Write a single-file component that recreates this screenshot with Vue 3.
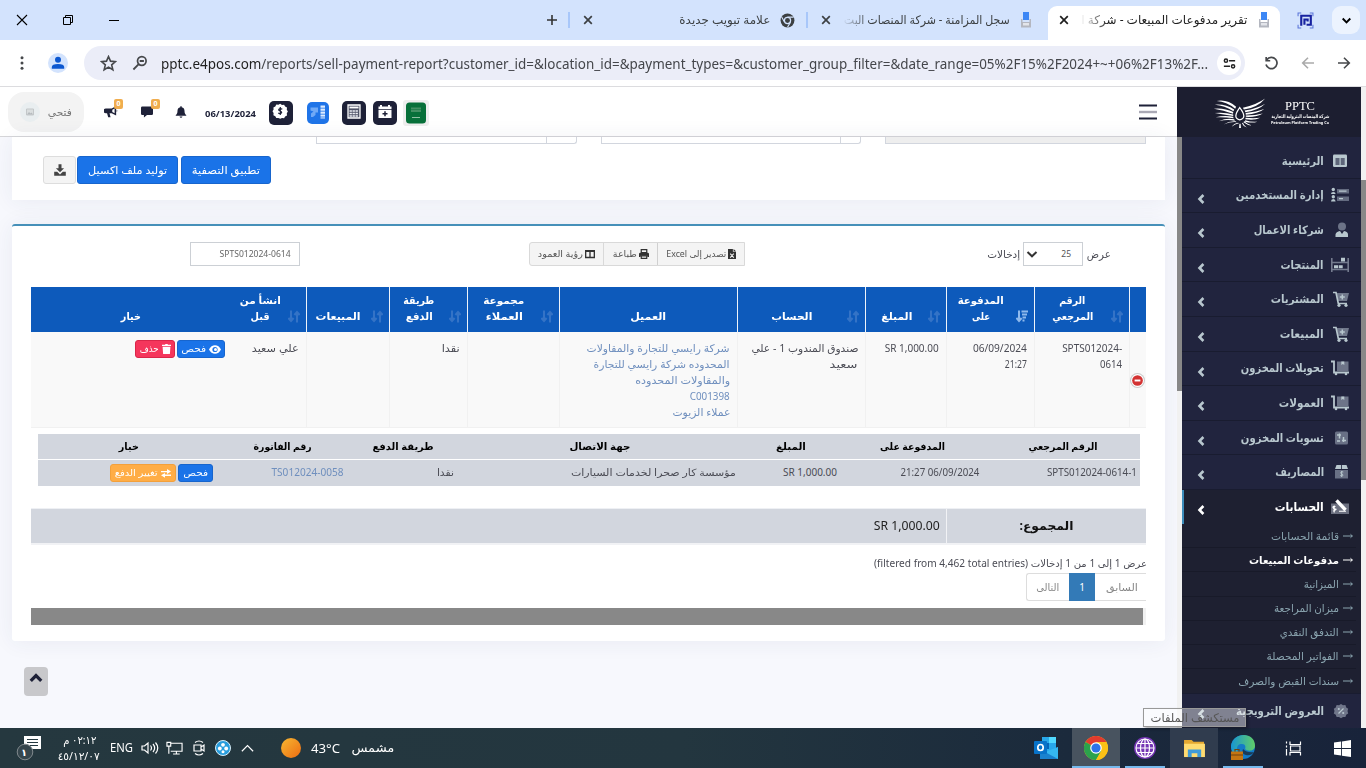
<script setup>
import { h } from 'vue'

const vFit = {
  mounted(el, { value }) {
    if (!value) return
    const natural = el.getBoundingClientRect().width
    const rtl = getComputedStyle(el.parentElement).direction === 'rtl'
    el.style.transform = `scaleX(${value / natural})`
    el.style.transformOrigin = rtl ? 'right center' : 'left center'
    el.style[rtl ? 'marginLeft' : 'marginRight'] = `${value - natural}px`
  },
}

const glyphs = {
  close: ['0 0 12 12', '<path d="M1 1l10 10M11 1L1 11" fill="none" stroke="currentColor" stroke-width="1.1"/>'],
  closeBold: ['0 0 12 12', '<path d="M2.2 2.2l7.6 7.6M9.8 2.2L2.2 9.8" fill="none" stroke="currentColor" stroke-width="1.7"/>'],
  restore: ['0 0 12 12', '<path d="M1.5 3.5h7v7h-7zM3.5 3.5v-2h7v7h-2" fill="none" stroke="currentColor"/>'],
  minus: ['0 0 12 12', '<path d="M1 6.5h10" stroke="currentColor"/>'],
  plus: ['0 0 12 12', '<path d="M6 1v10M1 6h10" stroke="currentColor" stroke-width="1.6"/>'],
  chevronDown: ['0 0 12 12', '<path d="M2.5 4.2L6 7.7l3.5-3.5" fill="none" stroke="currentColor" stroke-width="1.8"/>'],
  selectDown: ['0 0 12 12', '<path d="M1.5 4L6 8.300 10.500 4" fill="none" stroke="currentColor" stroke-width="2"/>'],
  chevronUp: ['0 0 12 12', '<path d="M1.5 8.5L6 4l4.5 4.5" fill="none" stroke="currentColor" stroke-width="2.8"/>'],
  chevronThin: ['0 0 12 12', '<path d="M.8 8.5L6 3.3l5.2 5.2" fill="none" stroke="currentColor" stroke-width="1.1"/>'],
  angle: ['0 0 8 10', '<path d="M6.400 1L2.500 5l3.900 4" fill="none" stroke="currentColor" stroke-width="2.600"/>'],
  chromeMono: ['0 0 16 16', '<circle cx="8" cy="8" r="7.4" fill="#3c4043"/><circle cx="8" cy="8" r="3.3" fill="#3c4043" stroke="#d3e3fd" stroke-width="1.3"/><path d="M8 4.4h6.5M4.9 9.8L1.8 4.3M11.1 9.8L8 15.3" stroke="#d3e3fd" stroke-width="1.2"/>'],
  device: ['0 0 12 16', '<path d="M3 0h6v8H3z" fill="#3d87f5"/><path d="M1 7h1.500v3h7V7H11v8.500H1z" fill="#b4b7c0"/><path d="M3 11h6v2.500H3z" fill="#e3e5ea"/>'],
  maze: ['0 0 16 16', '<path d="M1 4V1h3M12 1h3v3M15 12v3h-3M4 15H1v-3" fill="none" stroke="#5c76d9"/><path d="M3 3.500h10v8.500H9M4 3v10M7 12V7h3v2" fill="none" stroke="#1722a0" stroke-width="2"/>'],
  dots: ['0 0 16 16', '<circle cx="8" cy="2.7" r="1.5"/><circle cx="8" cy="8" r="1.5"/><circle cx="8" cy="13.3" r="1.5"/>'],
  person: ['0 0 20 20', '<circle cx="10" cy="10" r="10" fill="#d3e3fd"/><circle cx="10" cy="6.8" r="3" fill="#0b57d0"/><path d="M3.8 15.8V14q0-3 6.2-3t6.2 3v1.8z" fill="#0b57d0"/>'],
  star: ['0 0 16 16', '<path d="M8 1.5l1.9 4.3 4.7.4L11 9.3l1.1 4.6L8 11.4l-4.1 2.5L5 9.3 1.4 6.2l4.7-.4z" fill="none" stroke="currentColor" stroke-width="1.5"/>'],
  zoomOut: ['0 0 16 16', '<circle cx="9.8" cy="6" r="4.3" fill="none" stroke="currentColor" stroke-width="1.7"/><path d="M6.7 9.2L1.4 14.5M7.7 6h4.2" stroke="currentColor" stroke-width="1.8"/>'],
  tune: ['0 0 16 16', '<path d="M7.5 5H14M2 11h6.5" stroke="currentColor" stroke-width="1.7"/><circle cx="4.2" cy="5" r="1.7" fill="none" stroke="currentColor" stroke-width="1.6"/><circle cx="11.8" cy="11" r="1.7" fill="none" stroke="currentColor" stroke-width="1.6"/>'],
  reload: ['0 0 16 16', '<path d="M3.6 4.4A5.3 5.3 0 1 1 2.8 9M3 1.8v3.6h3.8" fill="none" stroke="currentColor" stroke-width="1.6"/>'],
  left: ['0 0 16 16', '<path d="M14 8H3M8 2.7L2.7 8 8 13.3" fill="none" stroke="currentColor" stroke-width="1.6"/>'],
  right: ['0 0 16 16', '<path d="M2 8h11M8 2.7L13.3 8 8 13.3" fill="none" stroke="currentColor" stroke-width="1.6"/>'],
  image: ['0 0 20 20', '<circle cx="10" cy="10" r="10" fill="#e9eef0"/><path d="M6.5 7h7v6h-7z" fill="#dadedf" stroke="#c3c7c9"/><path d="M7 12.5l2-2.5 1.5 1.5 1-1 1.5 2z" fill="#b5babd"/>'],
  megaphone: ['0 0 16 14', '<path d="M14 0v11L8.8 8.4H6.3L7.5 13H4.7L3.4 8.4H2A1.7 1.7 0 0 1 2 3h6.8zM12.2 3L9.5 4.5v2.4l2.7 1.5z" fill-rule="evenodd"/><path d="M14.6 4.3a1.5 1.5 0 0 1 0 2.6z"/>'],
  chat: ['0 0 14 13', '<path d="M1.5 0h11Q14 0 14 1.5v7Q14 10 12.500 10H7l-3.600 3V10H1.500Q0 10 0 8.500v-7Q0 0 1.500 0z"/>'],
  bell: ['0 0 14 14', '<path d="M6.2.3h1.600v1.100c2.400.5 3.300 2.300 3.300 4.300 0 2.700.8 3.800 2 4.900v.8H.9v-.8c1.200-1.100 2-2.200 2-4.900 0-2 .9-3.800 3.300-4.300zM5.300 12.200h3.400q-.3 1.600-1.700 1.600t-1.700-1.600z"/>'],
  money: ['0 0 24 24', '<path d="M12 5l1.800 1.100 2.100-.2 1 1.900 1.900 1-.2 2.100L19.700 12.700 18.600 14.500l.2 2.100-1.900 1-1 1.900-2.100-.2L12 20l-1.800-.9-2.100.2-1-1.900-1.900-1 .2-2.100L4.300 12.500l1.100-1.800-.2-2.100 1.900-1 1-1.900 2.100.2z" fill="#fff" transform="translate(-.8 -2.200)"/><path d="M13.300 8.300q-2.300-1.300-3.500.1c-.8 1.700 3.200 1.400 2.900 3.200-.7 1.500-2.200 1.300-3.500.5M11.300 6v8" fill="none" stroke="#1e2138" stroke-width="1.200"/>'],
  flow: ['0 0 22 22', '<path d="M13.500 3.500h4.500v13h-4.500z" fill="#dcebff"/><path d="M13 6.200h5.500M13 9.200h5.500M13 12.200h5.500M13 15h5.500" stroke="#1f74e8" stroke-width=".8"/><path d="M3.500 5.500h7.500v5H8.500v2.500L6 15H4v-3.500l2.500-2-3-1z" fill="#70a9f6"/>'],
  calculator: ['0 0 24 24', '<path d="M6 4h12v13H6z" fill="#505468" stroke="#fff" stroke-width="1.300"/><path d="M7.500 6.500h9" stroke="#fff" stroke-width="1.800"/><path d="M7.500 10h9M7.500 12.500h9M7.500 15h9" stroke="#eceef3" stroke-width="1.600" stroke-dasharray="2.400 .6"/>'],
  calendar: ['0 0 24 24', '<path d="M8 4v3M16 4v3" stroke="#fff" stroke-width="2"/><path d="M5.500 5.500h13v2.700h-13zM5.500 9h13v8h-13z" fill="#fff"/><path d="M12 10.300v5M9.500 12.800h5" stroke="#1e2138" stroke-width="1.500"/>'],
  flag: ['0 0 26 26', '<rect width="26" height="26" rx="3" fill="#eee"/><rect x="3" y="2.500" width="20" height="21" rx="3.500" fill="#07703a"/><path d="M8 8.500h10M8 11h10" stroke="#428f63" stroke-width="1.800"/><path d="M9 17.500h8" stroke="#8fc0a4"/>'],
  burger: ['0 0 18 16', '<path d="M0 1.500h18M0 14.500h18" stroke="#1e2138" stroke-width="2.200"/><path d="M0 8h18" stroke="#aaa9b5" stroke-width="2.400"/>'],
  download: ['0 0 12 12', '<path d="M4.500.3h3v3.900h2.600L6 8.300 1.900 4.200h2.600zM.2 7.800h3L6 10.500l2.800-2.700h3v3.900H.2z"/>'],
  excel: ['0 0 9 11', '<path d="M0 0h5.500v3H9v8H0zM6.300 0L9 2.400H6.300z"/><path d="M2.500 5l4 4.500M6.500 5l-4 4.500" stroke="#f4f4f4" stroke-width="1.200"/>'],
  print: ['0 0 12 12', '<path d="M2.700.8h6.600v3.500H2.700z" fill="none" stroke="currentColor" stroke-width="1.500"/><path d="M1.500 4.500h9Q12 4.500 12 6v3.500h-2V8H2v1.500H0V6q0-1.500 1.500-1.500z"/><path d="M2.700 8.300h6.600v2.900H2.700z" fill="none" stroke="currentColor" stroke-width="1.400"/>'],
  columns: ['0 0 12 10', '<path d="M.8 1h10.400v8.200H.8zM6 1v8M.5 1.700h11" fill="none" stroke="currentColor" stroke-width="1.600"/>'],
  sort: ['0 0 12 12', '<path d="M3 0v10M.4 7.500L3 10.500l2.600-3M9 12V2M6.400 4.500L9 1.500l2.600 3" fill="none" stroke="currentColor" stroke-width="2.100"/>'],
  sortDown: ['0 0 12 12', '<path d="M3 0v10M.4 7.500L3 10.500l2.600-3" fill="none" stroke="currentColor" stroke-width="2"/><path d="M5.500 1h6.500M6 4h5M6.500 7h3.500M6.500 10h2" stroke="currentColor" stroke-width="2.100"/>'],
  eye: ['0 0 12 9', '<path d="M0 4.500C2.500-1.200 9.500-1.200 12 4.500 9.500 10.200 2.500 10.200 0 4.500z"/><circle cx="6" cy="4.500" r="2.600" fill="#1a73e8"/><circle cx="6.500" cy="4.500" r="1.500"/>'],
  trash: ['0 0 9 10', '<path d="M0 .8h3L3.500 0h2L6 .8h3V2H0zM.6 2.800h7.800L7.900 10H1.100z"/>'],
  exchange: ['0 0 10 9', '<path d="M0 2h6V0l4 2.600-4 2.300V3.300H0zM10 6.900H4v1.900L0 6.300 4 4v1.500h6z"/>'],
  remove: ['0 0 14 14', '<circle cx="7" cy="7" r="7" fill="#ccc"/><circle cx="7" cy="7" r="6" fill="#fff"/><circle cx="7" cy="7" r="5" fill="#d33333"/><path d="M4.300 7h5.400" stroke="#fff" stroke-width="1.800"/>'],
  arrow: ['0 0 10 8', '<path d="M0 4h9.500M7.500 2.300L9.300 4 7.500 5.700" fill="none" stroke="currentColor"/>'],
  home: ['0 0 18 16', '<rect x="2" y="1.500" width="14" height="12.500" rx="1.200" fill="#b8c7ce"/><path d="M4.500 5h4v7h-4zM9.700 5h4v7h-4z" fill="#5d6579"/>'],
  users: ['0 0 18 16', '<circle cx="2.300" cy="2.500" r="1.700"/><circle cx="2.300" cy="9.700" r="1.700"/><path d="M0 7q0-2 2.300-2t2.300 2zM0 14.500q0-2.500 2.300-2.500t2.300 2.500z"/><path d="M6 2h12v4.500H6zM6 9.500h12V14H6z" fill="#646b80"/><path d="M8 4.200h7.500M8 11.700h4" stroke="currentColor" stroke-width="1.200"/>'],
  partner: ['0 0 18 16', '<circle cx="11" cy="4.500" r="4" fill="#6c7387"/><path d="M4.500 15v-2.500q.5-3 4.500-3.500l2 3 2-3q4 .5 4 3.500V15z"/>'],
  shelves: ['0 0 18 16', '<path d="M.8 1v14M17.200 1v14M1 5.500h16M1 12.500h16" stroke="#747b8e" stroke-width="1.600"/><path d="M10 .8h4v3.800h-4zM3 8.200h4v3H3zM7.700 8.200h4v3h-4z"/>'],
  cart: ['0 0 18 16', '<path d="M5.500 2H18l-2 8H7z" fill="#70788b"/><path d="M2 1.500h3l2.300 11H16" fill="none" stroke="currentColor" stroke-width="1.700"/><path d="M11.300 3.500v5M8.800 6h5" stroke="currentColor" stroke-width="1.500"/><circle cx="8" cy="14.300" r="1.600"/><circle cx="15" cy="14.300" r="1.600"/>'],
  dolly: ['0 0 18 16', '<path d="M6 1.500h11.500v9.500H6z" fill="#6d7488"/><path d="M0 1.500h3v11H18" fill="none" stroke="currentColor" stroke-width="1.800"/><path d="M10.300 1.500h3v3.500l-1.500-1-1.500 1z"/><circle cx="5" cy="14" r="1.300"/><circle cx="15" cy="14" r="1.300"/>'],
  sliders: ['0 0 18 16', '<rect x="4" y="1.500" width="13" height="13" rx="1.500" fill="#697085"/><path d="M6 5h4M8.500 3.500v5M11 10.500h4M12.500 7v5M6 11h3" stroke="currentColor" stroke-width="1.500"/>'],
  expense: ['0 0 18 16', '<path d="M4 6h13v8.500H4z" fill="#697085"/><path d="M5.500 1h4.700v4H4zM11 1h4.500L17 5h-6z"/><path d="M12.300 8c-3-1-3.200 1.600-1.500 2s1.700 2.700-1.500 1.600M10.700 7v6" fill="none" stroke="currentColor"/>'],
  accounts: ['0 0 20 16', '<path d="M1 4.500h18v10.500H1z" fill="#6c7080"/><path d="M6.500 1.300L15.500 11" stroke="#fff" stroke-width="3.400"/><path d="M5.500 7.500q-3-.5-2.500 1t2.500 1.500-2.500 2M4.200 6.500v7M9 12.300h7" fill="none" stroke="#fff" stroke-width="1.100"/>'],
  promo: ['0 0 18 16', '<path d="M10 1l2 1.300 2.400-.2.800 2.300 2 1.400-.7 2.300.7 2.300-2 1.400-.8 2.300-2.400-.1-2 1.300-2-1.300-2.400.1-.8-2.300-2-1.400.7-2.300L2.800 5.800l2-1.400.8-2.300 2.400.2z" fill="#70768a"/><path d="M7.500 10.500l5-5" stroke="currentColor" stroke-width="1.200"/><circle cx="7.800" cy="6" r="1.100"/><circle cx="12.200" cy="10" r="1.100"/>'],
  windows: ['0 0 16 16', '<path d="M0 2.300l6.700-.9v6.200H0zM7.500 1.300L16 0v7.600H7.500zM0 8.400h6.700v6.200L0 13.700zM7.500 8.400H16V16l-8.500-1.200z"/>'],
  taskview: ['0 0 18 16', '<path d="M1.500 1v2M1.500 5v2M1.500 8.500V15M5 1v3h10.500V1M5 15v-3h10.500v3M5.500 5.500h9.500v5H5.500z" fill="none" stroke="currentColor" stroke-width="1.200"/>'],
  edge: ['0 0 26 26', '<defs><linearGradient id="eg" x2="1"><stop stop-color="#1795d4"/><stop offset="1" stop-color="#61ce67"/></linearGradient></defs><circle cx="13" cy="12" r="12" fill="#137bc7"/><path d="M1 11C3-3 25-4 25 11c0 5-7 6-10 3 1-3 0-5-3-5C6 9 6 15 9 20 3 20 1 15 1 11z" fill="url(#eg)"/><path d="M13 14q4 4 11 3-3 4-8 3-5-1-3-6z" fill="#1a3b58"/><path d="M1 16.500h12V25H1z" fill="#c47512"/><path d="M5 16.500v-2h4v2M1 20h12" fill="none" stroke="#70430e" stroke-width="1.200"/>'],
  folder: ['0 0 24 20', '<path d="M1 1h8l2 2h11v15H1z" fill="#e5a932"/><path d="M1 5h22v14H1z" fill="#ffdc71"/><path d="M5 19v-8h14v8h-4v-4H9v4z" fill="#409bd7"/>'],
  globe: ['0 0 22 22', '<circle cx="11" cy="11" r="11" fill="#7536b5"/><g fill="none" stroke="#fff" stroke-width="1.200"><circle cx="11" cy="11" r="9"/><ellipse cx="11" cy="11" rx="4.500" ry="9"/><path d="M11 2v18M2 11h18M3.500 6.500h15M3.500 15.500h15"/></g>'],
  chrome: ['0 0 24 24', '<circle cx="12" cy="12" r="12" fill="#fbc116"/><path d="M12 12L1.600 6A12 12 0 0 1 22.400 6z" fill="#e33b2e"/><path d="M1.600 6A12 12 0 0 0 12 24l5.200-9L12 12z" fill="#2ba24c"/><path d="M12 6h10.400A12 12 0 0 1 12 24l5.200-9z" fill="#fbc116"/><circle cx="12" cy="12" r="5.800" fill="#fff"/><circle cx="12" cy="12" r="4.600" fill="#2d73e8"/>'],
  outlook: ['0 0 24 22', '<path d="M8 0h14v18H8z" fill="#28a8ea"/><path d="M15 0h7v6h-7z" fill="#50d9ff"/><path d="M8 6h7v6H8z" fill="#0364b8"/><path d="M6 10l9 5 9-5v12H6z" fill="#1a82cf"/><path d="M24 10v12L11 15z" fill="#35b8f1"/><rect y="4" width="13" height="13" rx="1" fill="#0873c9"/><ellipse cx="6.500" cy="10.500" rx="2.700" ry="3" fill="none" stroke="#fff" stroke-width="1.700"/>'],
  notes: ['0 0 26 26', '<path d="M8 1h17v13H14l-3 3v-3H8z" fill="#fff"/><path d="M11 4.500h11M11 7.500h11M14 10.500h8" stroke="#253941" stroke-width="1.200"/><circle cx="9" cy="17" r="7.800" fill="#36464d" stroke="#80898d"/>'],
  speaker: ['0 0 18 14', '<path d="M1 5h2.500L7 2v10L3.500 9H1zM9.500 4.500q2 2.500 0 5M12 3q3.300 4 0 8M14.500 1.500q4.500 5.500 0 11" fill="none" stroke="currentColor" stroke-width="1.200"/>'],
  network: ['0 0 18 14', '<path d="M5 2h12v8.500H5M11 10.500V13M7.500 13.300h7M1 1h4v4H1zM3 5v8" fill="none" stroke="currentColor" stroke-width="1.200"/>'],
  meet: ['0 0 12 16', '<path d="M1 5h7v6H1zM8 7l3-2v6L8 9M2 2.500Q6-.5 10 2.500M2 13.500q4 3 8 0" fill="none" stroke="currentColor" stroke-width="1.200"/>'],
  ball: ['0 0 16 16', '<circle cx="8" cy="8" r="7.500" fill="#289ddd" stroke="#d8effa"/><circle cx="8" cy="4.800" r="1.900" fill="#fff"/><circle cx="4.800" cy="8.500" r="1.900" fill="#fff"/><circle cx="11.200" cy="8.500" r="1.900" fill="#fff"/><circle cx="8" cy="11.700" r="1.500" fill="#fff"/>'],
  wings: ['0 0 54 32', '<g fill="#fff"><path d="M3 4q11-2 20 6l-1 2Q13 4.500 3 4zM1 8q11-1 20 5l-.7 1.700Q11 9 1 8zM0 12q11-1 20 3.500l-.2 1.700Q10 13.500 0 12zM1 16.500q10-1 19 1.500v1.500Q10 18 1 16.500zM2 21q9-2.500 18-.5l.3 1.500Q11 20.500 2 21zM5 25q8-3.500 16-2l.7 1.400Q13 23 5 25zM10 28.500q6-4 12.500-3.500l1 1Q17 25.500 10 28.500zM18 31q3-4 7-4.500l1 .7Q22 28 18 31zM53 1.500Q45 11 31 13l-1-2Q44 8 53 1.500zM53 7Q46 14 32.500 15.700l-.7-1.700Q45 12 53 7zM52 12.500q-6 5-19 5.700l-.2-1.700Q44 15.500 52 12.500zM50.500 17q-6 4-17.500 3.500V19q10 0 17.500-2zM48 21.500q-6 3-15.500 1.500l.3-1.500q8 1 15.200 0zM45 25.500q-6 2-13.200-.3l.6-1.200q6 2 12.600 1.500zM39.500 29.500q-5-.3-9-3.500l.8-1q4 3.300 8.200 4.500zM26 32l.4-4.500h1.200L28 32zM34 31.500q-4-1.500-5-4.500l1-.5q1 3 4 5z"/></g><path d="M26.700 11q-8 11 0 12.500 8.500-1.500 0-12.500z" fill="#1c1e30" stroke="#fff" stroke-width="1.300"/>'],
}
const Icon = (p) =>
  h('svg', {
    viewBox: glyphs[p.name][0],
    width: p.w,
    height: p.h || p.w,
    fill: 'currentColor',
    innerHTML: glyphs[p.name][1],
  })
Icon.props = ['name', 'w', 'h']

const menu = [
  { t: 'الرئيسية', w: 42, i: 'home', leaf: true },
  { t: 'إدارة المستخدمين', w: 88, i: 'users' },
  { t: 'شركاء الاعمال', w: 70, i: 'partner' },
  { t: 'المنتجات', w: 43, i: 'shelves' },
  { t: 'المشتريات', w: 53, i: 'cart' },
  { t: 'المبيعات', w: 44, i: 'cart' },
  { t: 'تحويلات المخزون', w: 83, i: 'dolly' },
  { t: 'العمولات', w: 45, i: 'dolly' },
  { t: 'تسويات المخزون', w: 83, i: 'sliders' },
  { t: 'المصاريف', w: 49, i: 'expense' },
  {
    t: 'الحسابات', w: 49, i: 'accounts', active: true,
    sub: [
      ['قائمة الحسابات', 68], ['مدفوعات المبيعات', 90], ['الميزانية', 35], ['ميزان المراجعة', 65],
      ['التدفق النقدي', 59], ['الفواتير المحصلة', 72], ['سندات القبض والصرف', 101],
    ],
  },
  { t: 'العروض الترويجية', w: 88, i: 'promo' },
]

const columns = [
  { head: [], body: [], icon: '' },
  { head: [['الرقم', 26], ['المرجعي', 41]], body: [['SPTS012024-', 60], ['0614', 22]], icon: 'sort', ltr: true },
  { head: [['المدفوعة', 46], ['على', 18]], body: [['06/09/2024', 54], ['21:27', 22]], icon: 'sortDown' },
  { head: [['المبلغ', 31]], body: [['SR 1,000.00', 54]], icon: 'sort', ltr: true },
  { head: [['الحساب', 41]], body: [['صندوق المندوب 1 - علي', 107], ['سعيد', 28]], icon: 'sort' },
  {
    head: [['العميل', 36]], icon: '', link: true,
    body: [['شركة رايسي للتجارة والمقاولات', 143], ['المحدوده شركة رايسي للتجارة', 136], ['والمقاولات المحدوده', 95], ['C001398', 40], ['عملاء الزيوت', 58]],
  },
  { head: [['مجموعة', 41], ['العملاء', 37]], body: [], icon: 'sort' },
  { head: [['طريقة', 31], ['الدفع', 27]], body: [['نقدا', 18]], icon: 'sort' },
  { head: [['المبيعات', 45]], body: [], icon: 'sort' },
  { head: [['انشأ من', 41], ['قبل', 19]], body: [['علي سعيد', 47]], icon: 'sort' },
  { head: [['خيار', 20]], body: [], icon: '', actions: true },
]

const detailHead = [['الرقم المرجعي', 69], ['المدفوعة على', 65], ['المبلغ', 30], ['جهة الاتصال', 61], ['طريقة الدفع', 61], ['رقم الفاتورة', 58], ['خيار', 20]]
const detailRow = [['SPTS012024-0614-1', 90], ['21:27 06/09/2024', 79], ['SR 1,000.00', 54], ['مؤسسة كار صحرا لخدمات السيارات', 165], ['نقدا', 17], ['TS012024-0058', 72]]
</script>

<template>
  <div class="screen">
    <header class="tabs">
      <div class="win"><Icon name="close" w="12" /><Icon name="restore" w="12" /><Icon name="minus" w="12" /></div>
      <Icon class="plus" name="plus" w="12" />
      <i class="sep"></i>
      <div class="tab">
        <Icon name="closeBold" w="12" />
        <div class="title" dir="rtl"><span v-fit="91">علامة تبويب جديدة</span></div>
        <Icon name="chromeMono" w="15" />
      </div>
      <i class="sep"></i>
      <div class="tab second">
        <Icon name="closeBold" w="12" />
        <div class="title fade" dir="rtl"><span v-fit="166">سجل المزامنة - شركة المنصات البت</span></div>
        <Icon name="device" w="12" h="16" />
      </div>
      <div class="tab current">
        <Icon name="closeBold" w="12" />
        <div class="title fade" dir="rtl"><span v-fit="166">تقرير مدفوعات المبيعات - شركة ا</span></div>
        <Icon name="device" w="12" h="16" />
      </div>
      <Icon class="maze" name="maze" w="17" />
      <div class="tabsearch"><Icon name="chevronDown" w="13" /></div>
    </header>

    <div class="toolbar">
      <Icon class="kebab" name="dots" w="16" />
      <Icon class="profile" name="person" w="20" />
      <div class="address">
        <Icon name="star" w="17" />
        <Icon class="mag" name="zoomOut" w="16" />
        <div class="url"><span v-fit="1047"><b>pptc.e4pos.com</b>/reports/sell-payment-report?customer_id=&amp;location_id=&amp;payment_types=&amp;customer_group_filter=&amp;date_range=05%2F15%2F2024+~+06%2F13%2F...</span></div>
        <div class="tune"><Icon name="tune" w="15" /></div>
      </div>
      <Icon class="nav1" name="reload" w="17" />
      <Icon class="nav2" name="left" w="16" />
      <Icon class="nav3" name="right" w="16" />
    </div>

    <div class="page">
      <main>
        <nav class="topbar">
          <div class="user"><Icon name="image" w="20" /><span class="rt" dir="rtl"><span v-fit="24">فتحي</span></span></div>
          <div class="alert a1"><Icon name="megaphone" w="14" h="12" /><em>0</em></div>
          <div class="alert a2"><Icon name="chat" w="12" h="12" /><em>0</em></div>
          <Icon class="bell" name="bell" w="12" h="12" />
          <div class="date"><span v-fit="51">06/13/2024</span></div>
          <div class="sq dark"><Icon name="money" w="24" /></div>
          <div class="sq blue"><Icon name="flow" w="22" /></div>
          <div class="sq dark s3"><Icon name="calculator" w="24" /></div>
          <div class="sq dark s4"><Icon name="calendar" w="24" /></div>
          <Icon class="flag" name="flag" w="26" />
          <Icon class="burger" name="burger" w="18" h="16" />
        </nav>

        <div class="content">
          <section class="filters">
            <div class="fields">
              <div class="field"><i></i></div>
              <div class="field f2"><i></i></div>
              <div class="field off"></div>
            </div>
            <div class="actions" dir="rtl">
              <button class="primary apply"><span v-fit="68">تطبيق التصفية</span></button>
              <button class="primary gen"><span v-fit="79">توليد ملف اكسيل</span></button>
              <button class="dl"><Icon name="download" w="12" /></button>
            </div>
          </section>

          <section class="report" dir="rtl">
            <div class="controls">
              <div class="length">
                <span v-fit="24">عرض</span>
                <div class="select"><span>25</span><Icon name="selectDown" w="12" /></div>
                <span v-fit="33">إدخالات</span>
              </div>
              <div class="export">
                <div class="b1"><Icon name="excel" w="8" h="10" /><span v-fit="60">تصدير إلى Excel</span></div>
                <div class="b2"><Icon name="print" w="10" /><span v-fit="24">طباعة</span></div>
                <div class="b3"><Icon name="columns" w="10" /><span v-fit="45">رؤية العمود</span></div>
              </div>
              <div class="search"><span v-fit="71">SPTS012024-0614</span></div>
            </div>

            <div class="grid head">
              <div v-for="(c, i) in columns" :key="i" class="th" :class="{ sorted: c.icon === 'sortDown', sortable: c.icon }">
                <Icon v-if="c.icon" :name="c.icon" w="12" h="13" />
                <div class="lines"><div v-for="l in c.head" :key="l[0]"><span v-fit="l[1]">{{ l[0] }}</span></div></div>
              </div>
            </div>
            <div class="grid body">
              <div v-for="(c, i) in columns" :key="i" class="td" :class="{ link: c.link, expand: i === 0 }">
                <Icon v-if="i === 0" name="remove" w="15" />
                <div v-for="l in c.body" :key="l[0]"><span v-fit="l[1]"><bdi :dir="c.ltr ? 'ltr' : 'auto'">{{ l[0] }}</bdi></span></div>
                <div v-if="c.actions" class="rowbtns">
                  <button class="primary mini eye"><Icon name="eye" w="12" h="9" /><span v-fit="25">فحص</span></button>
                  <button class="danger mini"><Icon name="trash" w="9" h="10" /><span v-fit="19">حذف</span></button>
                </div>
              </div>
            </div>

            <div class="detail">
              <div class="dgrid dh"><div v-for="d in detailHead" :key="d[0]"><span v-fit="d[1]">{{ d[0] }}</span></div></div>
              <div class="dgrid db">
                <div v-for="(d, i) in detailRow" :key="i" :class="{ link: i === 5 }"><span v-fit="d[1]"><bdi :dir="i === 3 || i === 4 ? 'rtl' : 'ltr'">{{ d[0] }}</bdi></span></div>
                <div class="rowbtns">
                  <button class="primary mini look"><span v-fit="25">فحص</span></button>
                  <button class="warn mini"><Icon name="exchange" w="10" h="9" /><span v-fit="43">تغيير الدفع</span></button>
                </div>
              </div>
            </div>

            <div class="total">
              <div class="label"><span v-fit="54">المجموع:</span></div>
              <div class="sum"><span v-fit="66"><bdi dir="ltr">SR 1,000.00</bdi></span></div>
            </div>
            <div class="info"><span v-fit="273">عرض 1 إلى 1 من 1 إدخالات <bdi dir="ltr">(filtered from 4,462 total entries)</bdi></span></div>
            <div class="pager">
              <div class="prev"><span v-fit="32">السابق</span></div>
              <div class="num">1</div>
              <div class="next"><span v-fit="23">التالى</span></div>
            </div>
            <div class="hscroll"><i></i></div>
          </section>
          <div class="up"><Icon name="chevronUp" w="14" /></div>
        </div>
      </main>

      <aside>
        <div class="logo">
          <Icon name="wings" w="54" h="31" />
          <div class="brand">
            <div class="pptc"><span v-fit="30">PPTC</span></div>
            <div class="tiny" dir="rtl"><span v-fit="58">شركة المنصات البترولية التجارية</span></div>
            <div class="tiny en"><span v-fit="58">Petroleum Platform Trading Co</span></div>
          </div>
        </div>
        <div class="side">
          <div class="track"><i></i></div>
          <ul class="menu" dir="rtl">
            <li v-for="m in menu" :key="m.t" :class="{ active: m.active }">
              <div class="item">
                <Icon :name="m.i" :w="m.active ? 20 : 18" h="16" />
                <span v-fit="m.w">{{ m.t }}</span>
                <Icon v-if="!m.leaf" class="caret" name="angle" w="8" h="10" />
              </div>
              <div v-if="m.sub" class="subs">
                <div v-for="(s, i) in m.sub" :key="s[0]" class="sub" :class="{ on: i === 1 }">
                  <Icon name="arrow" w="10" h="8" /><span v-fit="s[1]">{{ s[0] }}</span>
                </div>
              </div>
            </li>
          </ul>
        </div>
      </aside>
      <div class="vscroll"><i></i></div>
      <div class="tooltip" dir="rtl"><span v-fit="89">مستكشف الملفات</span></div>
    </div>

    <footer>
      <div class="notes"><Icon name="notes" w="26" /><b>١</b></div>
      <div class="clock" dir="rtl"><div><span v-fit="33">٠٢:١٢ م</span></div><div><span v-fit="42"><bdi dir="ltr">٤٥/١٢/٠٧</bdi></span></div></div>
      <div class="eng"><span v-fit="23">ENG</span></div>
      <div class="tray">
        <Icon name="speaker" w="18" h="14" /><Icon name="network" w="17" h="14" /><Icon name="meet" w="12" h="16" /><Icon name="ball" w="16" /><Icon name="chevronThin" w="13" />
      </div>
      <i class="sun"></i>
      <div class="temp"><span v-fit="29">43°C</span></div>
      <div class="sky" dir="rtl"><span v-fit="43">مشمس</span></div>
      <div class="apps">
        <div class="app"><Icon name="outlook" w="24" h="22" /></div>
        <div class="app lit run"><Icon name="chrome" w="24" /></div>
        <div class="app run short"><Icon name="globe" w="22" /></div>
        <div class="app hover"><Icon name="folder" w="23" h="19" /></div>
        <div class="app run short"><Icon name="edge" w="26" /></div>
        <div class="app view"><Icon name="taskview" w="18" h="17" /></div>
        <div class="app"><Icon name="windows" w="17" /></div>
      </div>
    </footer>
  </div>
</template>

<style>
html, body { margin: 0; overflow: hidden; }
</style>

<style scoped>
* { box-sizing: border-box; }
.screen { width: 1366px; height: 768px; overflow: hidden; display: flex; flex-direction: column; font-family: "Noto Sans", "DejaVu Sans", sans-serif; font-size: 10.5px; line-height: 16px; color: #4b4c55; background: #fff; }
.screen span { display: inline-block; white-space: nowrap; }
svg { display: block; flex: none; }
button { font: inherit; border: 0; margin: 0; padding: 0; display: flex; align-items: center; justify-content: center; color: #fff; border-radius: 3px; }

.tabs { height: 40px; flex: none; background: #d3e3fd; display: flex; align-items: center; color: #000; }
.win { display: flex; gap: 34px; padding-left: 16px; width: 546px; }
.plus { color: #333; }
.sep { width: 2px; height: 16px; background: #a8c7fa; margin-left: 10px; }
.tab { display: flex; align-items: center; height: 34px; width: 225px; padding-left: 12px; color: #3c4043; margin-right: 1px; }
.tab .title { flex: 1; font-size: 12px; height: 18px; line-height: 18px; margin: 0 10px 0 16px; white-space: nowrap; }
.tab .fade { -webkit-mask-image: linear-gradient(to right, transparent, #000 28px); mask-image: linear-gradient(to right, transparent, #000 28px); }
.tab.second { width: 240px; margin: 0; padding-right: 16px; }
.tab.second .title { margin: 0 10px; }
.tab.current { background: #fff; width: 232px; align-self: flex-end; border-radius: 9px 9px 0 0; padding: 0 10px 6px 10px; color: #1f1f1f; margin-right: 0; }
.tab.current .title { margin: 0 11px 0 10px; }
.maze { margin-left: 17px; }
.tabsearch { width: 28px; height: 28px; border-radius: 9px; background: #ecf3fe; margin-left: 18px; display: flex; align-items: center; justify-content: center; }

.toolbar { height: 47px; flex: none; background: #fff; border-bottom: 1px solid #dcdcdf; display: flex; align-items: center; color: #46484b; }
.kebab { margin-left: 14px; }
.profile { margin-left: 18px; }
.address { margin-left: 16px; width: 1161px; height: 34px; border-radius: 17px; background: #ebedf8; display: flex; align-items: center; padding-left: 16px; }
.mag { margin-left: 15px; }
.url { margin-left: 13px; width: 1047px; font-size: 15px; line-height: 20px; color: #44464b; font-family: "Noto Sans", sans-serif; }
.url b { font-weight: 400; color: #1f1f1f; }
.tune { margin-left: 9px; width: 24px; height: 24px; border-radius: 50%; background: #fff; display: flex; align-items: center; justify-content: center; color: #222; }
.nav1 { margin-left: 18px; }
.nav2 { margin-left: 20px; color: #aaa; }
.nav3 { margin-left: 20px; }

.page { height: 641px; flex: none; display: flex; position: relative; }
main { width: 1177px; background: #f7f8fd; display: flex; flex-direction: column; }
.topbar { height: 50px; flex: none; background: #fff; border-bottom: 1px solid #d6d6d9; display: flex; align-items: center; color: #1e2138; }
.user { width: 76px; height: 40px; border-radius: 16px; background: #f3f3f3; margin-left: 8px; display: flex; align-items: center; padding-left: 12px; color: #777; }
.user .rt { width: 24px; margin-left: 8px; font-size: 11px; }
.alert { position: relative; width: 14px; height: 12px; }
.alert em { position: absolute; left: 10px; top: -7px; width: 9px; height: 10px; background: #f0ad4e; border-radius: 2px; color: #fff; font: bold 7px/10px "Open Sans", sans-serif; text-align: center; }
.a1 { margin-left: 20px; }
.a2 { margin-left: 23px; width: 12px; }
.bell { margin-left: 22px; }
.date { margin-left: 18px; width: 51px; font-weight: 700; font-size: 9.5px; padding-top: 5px; }
.sq { width: 24px; height: 24px; border-radius: 5px; background: #1e2138; margin-top: 3px; margin-left: 13px; }
.sq.blue { width: 22px; height: 22px; background: #1f74e8; margin-left: 14px; }
.s3 { margin-left: 13px; }
.s4 { margin-left: 7px; }
.flag { margin-left: 6px; margin-top: 3px; }
.burger { margin-left: 710px; }

.content { flex: 1; padding: 0 12px; display: flex; flex-direction: column; }
.filters { height: 63px; background: #fff; box-shadow: 0 1px 22px rgba(40, 50, 100, .07); }
.fields { display: flex; height: 7px; padding-left: 304px; }
.field { width: 261px; border: 1px solid #d2d6de; border-top: 0; margin-right: 24px; display: flex; justify-content: flex-end; border-radius: 0 0 3px 0; }
.f2 { width: 260px; }
.field i { width: 30px; border-left: 1px solid #d2d6de; }
.f2 i { width: 20px; }
.off { background: #eee; margin: 0; border-radius: 0; }
.actions { display: flex; height: 28px; margin-top: 12px; padding-right: 894px; }
.primary { background: #1a73e8; border: 1px solid #1765cd; }
.apply { width: 90px; }
.gen { width: 101px; margin-right: 3px; }
.dl { width: 33px; margin-right: 1px; background: #f4f4f4; border: 1px solid #ddd; color: #444; }

.report { margin-top: 24px; height: 417px; background: #fff; border-top: 2px solid #4690b9; border-radius: 3px; box-shadow: 0 1px 22px rgba(40, 50, 100, .07); padding: 16px 19px 0; }
.controls { display: flex; height: 24px; line-height: 24px; }
.length { display: flex; width: 124px; margin-right: 35px; align-items: center; }
.select { width: 60px; height: 24px; border: 1px solid #ccd0d5; margin: 0 4px 0 3px; display: flex; align-items: center; justify-content: space-between; padding: 0 11px 0 2px; font-size: 8.5px; color: #555; }
.select svg { color: #333; }
.export { display: flex; margin-right: 242px; height: 24px; background: #f4f4f4; border: 1px solid #d9d9d9; font-size: 9px; width: 216px; border-radius: 3px 0 0 3px; color: #555; }
.export > div { display: flex; align-items: center; gap: 2px; justify-content: center; }
.export svg { color: #333; }
.b1 { width: 87px; border-left: 1px solid #d0d0d0; }
.b2 { width: 54px; border-left: 1px solid #d9d9d9; }
.b3 { flex: 1; }
.search { width: 110px; margin-right: 229px; border: 1px solid #ccd0d5; padding-right: 8px; font-size: 8.5px; line-height: 22px; color: #666; }

.grid { display: grid; grid-template-columns: 17px 95px 88px 81px 128px 178px 92px 78px 83px 76px 199px; }
.head { height: 45px; margin-top: 21px; background: #0d5abb; color: #fff; font-weight: 700; }
.th { display: flex; align-items: flex-end; padding: 0 8px 8px; border-left: 1px solid #eef3fa; }
.th:nth-child(10), .th:nth-child(11) { border-left: 0; }
.th svg { color: #3473c6; margin: 0 -2px 1px 0; }
.th.sorted svg { color: #8fb9ec; }
.lines { flex: 1; text-align: center; }
.sortable .lines { padding-right: 9px; }
.th:nth-child(10) .lines { padding-right: 6px; }
.body { height: 96px; background: #f9f9f9; border-bottom: 1px solid #f1f1f1; }
.td { padding: 8px 7px 0; border-left: 1px solid #f1f1f1; height: 95px; }
.td:nth-child(10), .td:nth-child(11) { border-left: 0; }
.expand { padding: 41px 1px 0 0; }
.link { color: #6f8fbe; }
.rowbtns { display: flex; }
.mini { height: 18px; font-size: 9px; border-radius: 3px; gap: 3px; }
.eye { width: 48px; margin-right: -2px; }
.danger { width: 40px; background: #f5365c; border: 1px solid #d92649; margin-right: 2px; }
.warn { width: 66px; background: #ffad46; border: 1px solid #f3a03b; margin-right: 2px; }
.look { width: 35px; }

.detail { margin: 6px 6px 0 7px; width: 1102px; height: 52px; background: #d2d6de; }
.dgrid { display: grid; grid-template-columns: 158px 142px 101px 282px 111px 130px 178px; font-size: 10px; }
.dh { height: 26px; line-height: 25px; border-bottom: 1px solid #fff; color: #000; font-weight: 600; text-align: center; }
.dh > div { padding-left: 3px; }
.db { line-height: 24px; }
.db > div { padding-right: 3px; }
.db .rowbtns { padding-top: 4px; line-height: 16px; }

.total { margin-top: 22px; height: 37px; border-top: 1px solid #eef0f4; border-bottom: 2px solid #f1f2f5; background: #d2d6de; display: flex; line-height: 34px; font-size: 12px; color: #222; }
.label { width: 200px; border-left: 1px solid #f1f2f5; text-align: center; font-weight: 700; color: #111; }
.sum { padding-right: 6px; }
.info { margin-top: 10px; height: 18px; margin-right: -1px; font-size: 10px; white-space: nowrap; }
.pager { display: flex; height: 28px; line-height: 26px; color: #888; font-size: 10px; }
.prev { width: 51px; border: 1px solid #ddd; border-right: 0; border-left: 0; padding-right: 8px; }
.num { width: 26px; text-align: center; background: #337ab7; color: #fff; line-height: 28px; }
.next { width: 43px; border: 1px solid #ddd; border-right: 0; border-radius: 3px 0 0 3px; text-align: center; }
.hscroll { height: 17px; margin-top: 7px; background: #f1f1f1; direction: ltr; }
.hscroll i { display: block; width: 1112px; height: 17px; background: #888; }
.up { width: 24px; height: 29px; margin: 26px 0 0 12px; border-radius: 4px; background: #c8c8cb; display: flex; justify-content: center; padding-top: 4px; color: #1e2138; }

aside { width: 184px; display: flex; flex-direction: column; }
.logo { height: 50px; flex: none; background: #1c1e30; display: flex; align-items: center; padding-left: 36px; color: #fff; }
.brand { margin-left: 4px; width: 58px; padding-top: 2px; }
.pptc { font: 12px/13px "Liberation Serif", serif; padding-left: 14px; }
.tiny { font-size: 5px; line-height: 7px; font-weight: 700; }
.en { font-size: 4px; line-height: 6px; }
.side { flex: 1; display: flex; min-height: 0; }
.track { width: 5px; background: #f1f1f1; flex: none; }
.track i { display: block; height: 254px; background: #888; }
.menu { margin: 0; padding: 7px 0 0; list-style: none; width: 179px; background: #21243e; overflow: hidden; font-size: 11.5px; font-weight: 700; color: #b8c7ce; }
.menu li { border-bottom: 1px solid #191c30; }
.item { height: 33.6px; display: flex; align-items: center; padding-right: 12px; position: relative; }
.item span { margin-right: 7px; }
.item .caret { position: absolute; left: 15px; top: 15px; }
.active { background: #1e2031; color: #fff; }
.active .item { border-left: 2px solid #3c8dbc; padding-right: 11px; }
.active .item .caret { left: 13px; }
.active .item span { margin-right: 6px; }
.subs { font-weight: 400; font-size: 10.5px; color: #8aa4af; height: 169.5px; padding-top: .6px; }
.sub { height: 24.15px; display: flex; align-items: center; border-bottom: 1px solid #181a29; margin-right: 5px; padding-right: 3px; }
.sub span { margin-right: 4px; }
.sub:last-child { border: 0; }
.sub.on { color: #fff; font-weight: 700; }
.vscroll { width: 5px; background: #f1f1f1; padding-top: 93px; }
.vscroll i { display: block; height: 300px; background: #888; }
.tooltip { position: absolute; left: 1143px; top: 621px; width: 103px; height: 19px; border: 1px solid #999; background: rgba(255, 255, 255, .43); color: #555; font-size: 12px; line-height: 18px; padding-right: 5px; box-shadow: 2px 2px 3px rgba(0, 0, 0, .3); }

footer { height: 40px; flex: none; display: flex; align-items: center; color: #fff; background: linear-gradient(90deg, #25383f 0, #23363f 50%, #1b2a3c 78%, #18233a 100%); font-size: 12px; }
.notes { width: 26px; height: 26px; margin-left: 16px; position: relative; }
.notes b { position: absolute; left: 5px; top: 9px; font-size: 10px; }
.clock { width: 44px; margin-left: 14px; font-size: 11px; line-height: 16px; }
.clock > div:first-child { padding-right: 4px; }
.eng { width: 23px; margin-left: 10px; }
.tray { display: flex; align-items: center; gap: 10px; margin-left: 8px; width: 116px; }
.tray svg:nth-child(2) { margin-left: -3px; }
.tray svg:nth-child(4) { margin-left: 0; }
.sun { width: 20px; height: 20px; border-radius: 50%; background: linear-gradient(135deg, #f7b832, #ed6c12); margin-left: 24px; }
.temp { width: 29px; margin-left: 10px; font-size: 13px; }
.sky { width: 44px; margin-left: 10px; font-size: 12px; }
.apps { display: flex; margin-left: auto; height: 40px; }
.app { width: 48px; height: 40px; display: flex; align-items: center; justify-content: center; position: relative; margin-right: 1.3px; }
.app:last-child { margin-right: 0; }
.app.view { padding-left: 3px; }
.lit { background: #48535f; }
.hover { background: #303c4e; }
.run::after { content: ""; position: absolute; left: 0; right: 0; bottom: 0; height: 2px; background: #76b9ed; }
.short::after { left: 4px; right: 4px; }
</style>
